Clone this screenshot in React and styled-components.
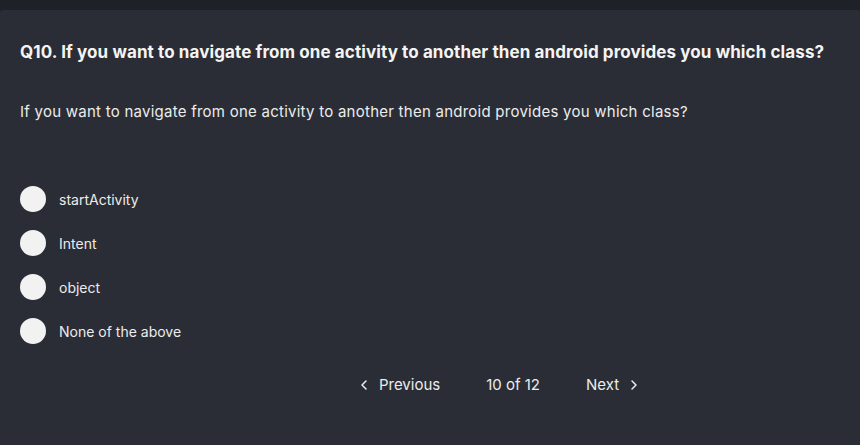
import React, { useState } from "react";
import styled, { createGlobalStyle } from "styled-components";

const GlobalStyle = createGlobalStyle`
  html, body { margin: 0; padding: 0; background: #1f2129; }
  body { font-family: "Inter", "Noto Sans", sans-serif; }
`;

const TopBar = styled.div`
  height: 10px;
  background: #1f2129;
`;

const Card = styled.main`
  background: #2a2d35;
  min-height: 435px;
  padding: 30px 20px 0 20px;
  box-sizing: border-box;
  border-top-left-radius: 3px;
  border-top-right-radius: 3px;
  color: #f4f4f4;
`;

const Title = styled.h1`
  margin: 0;
  font-size: 17px;
  font-weight: 700;
  line-height: 24px;
  letter-spacing: 0.1px;
  white-space: nowrap;
`;

const Body = styled.p`
  margin: 38px 0 0 0;
  font-size: 15px;
  line-height: 20px;
  font-weight: 400;
  letter-spacing: 0.25px;
  color: #ececec;
  white-space: nowrap;
`;

const Options = styled.div`
  margin-top: 64px;
  display: flex;
  flex-direction: column;
  gap: 18px;
`;

const Option = styled.label`
  display: flex;
  align-items: center;
  gap: 13px;
  height: 26px;
  cursor: pointer;
  font-size: 14px;
  color: #ececec;
`;

const Radio = styled.span`
  width: 26px;
  height: 26px;
  border-radius: 50%;
  background: ${(p) => (p.$checked ? "#7c6cf0" : "#f2f2f2")};
  flex-shrink: 0;
`;

const Pager = styled.nav`
  display: flex;
  justify-content: center;
  align-items: center;
  margin-top: 31px;
  gap: 46px;
  font-size: 15px;
  color: #ececec;
  padding-left: 138px;
`;

const PagerButton = styled.button`
  display: flex;
  align-items: center;
  gap: 10px;
  background: none;
  border: none;
  color: inherit;
  font: inherit;
  padding: 0;
  cursor: pointer;
`;

const Count = styled.span``;

const Chevron = ({ dir }) => (
  <svg width="10" height="12" viewBox="0 0 10 12" fill="none">
    <path
      d={dir === "left" ? "M7 2 L3 6 L7 10" : "M3 2 L7 6 L3 10"}
      stroke="#ececec"
      strokeWidth="1.5"
      strokeLinecap="round"
      strokeLinejoin="round"
    />
  </svg>
);

const options = ["startActivity", "Intent", "object", "None of the above"];

export default function App() {
  const [sel, setSel] = useState(null);
  return (
    <>
      <GlobalStyle />
      <TopBar />
      <Card>
        <Title>
          Q10. If you want to navigate from one activity to another then android provides you which class?
        </Title>
        <Body>
          If you want to navigate from one activity to another then android provides you which class?
        </Body>
        <Options>
          {options.map((o, i) => (
            <Option key={o} onClick={() => setSel(i)}>
              <Radio $checked={sel === i} />
              {o}
            </Option>
          ))}
        </Options>
        <Pager>
          <PagerButton>
            <Chevron dir="left" />
            Previous
          </PagerButton>
          <Count>10 of 12</Count>
          <PagerButton>
            Next
            <Chevron dir="right" />
          </PagerButton>
        </Pager>
      </Card>
    </>
  );
}
